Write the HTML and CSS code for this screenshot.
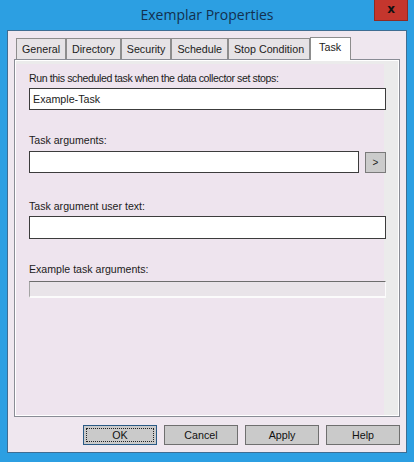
FILE: index.html
```html
<!DOCTYPE html>
<html>
<head>
<meta charset="utf-8">
<link rel="stylesheet" href="styles.css">
</head>
<body>
<div class="win">
  <div class="titlebar">
    <span class="title">Exemplar Properties</span>
    <div class="close">x</div>
  </div>
  <div class="client">
    <div class="tabs">
      <div class="tab">General</div>
      <div class="tab">Directory</div>
      <div class="tab">Security</div>
      <div class="tab">Schedule</div>
      <div class="tab">Stop Condition</div>
      <div class="tab active">Task</div>
    </div>
    <div class="panel">
      <div class="lbl l1">Run this scheduled task when the data collector set stops:</div>
      <div class="field f1">Example-Task</div>
      <div class="lbl l2">Task arguments:</div>
      <div class="row">
        <div class="field grow"></div>
        <div class="more">&gt;</div>
      </div>
      <div class="lbl l3">Task argument user text:</div>
      <div class="field f3"></div>
      <div class="lbl l4">Example task arguments:</div>
      <div class="disabled"></div>
    </div>
    <div class="buttons">
      <div class="btn default">OK</div>
      <div class="btn">Cancel</div>
      <div class="btn">Apply</div>
      <div class="btn">Help</div>
    </div>
  </div>
</div>
</body>
</html>
```
FILE: styles.css
```css
html, body {
  margin: 0;
  padding: 0;
}
body {
  width: 414px;
  height: 462px;
  overflow: hidden;
  font-family: "Liberation Sans", Arial, sans-serif;
  color: #1b1b1b;
}
.win {
  width: 414px;
  height: 462px;
  box-sizing: border-box;
  background: #2c9fe2;
  padding: 0 7px 9px;
  display: flex;
  flex-direction: column;
}
.titlebar {
  height: 30px;
  margin: 0 -7px;
  position: relative;
  display: flex;
  align-items: center;
  justify-content: center;
}
.title {
  font-family: "Open Sans", "Noto Sans", sans-serif;
  font-size: 14px;
  color: #13304e;
  margin-top: -1px;
}
.close {
  position: absolute;
  right: 6px;
  top: 0;
  width: 34px;
  height: 21px;
  box-sizing: border-box;
  background: #c4362d;
  border: 1px solid #8f2a23;
  border-top: none;
  display: flex;
  align-items: center;
  justify-content: center;
  font-family: "DejaVu Sans", sans-serif;
  font-weight: bold;
  font-size: 12px;
  color: #111;
  padding-bottom: 2px;
}
.client {
  flex: 1;
  background: #efe7ef;
  border: 1px solid #3e6d92;
  padding: 6px 6px 7px;
  display: flex;
  flex-direction: column;
}
.tabs {
  height: 22px;
  display: flex;
  align-items: flex-end;
  padding-left: 2px;
}
.tab {
  height: 21px;
  box-sizing: border-box;
  border: 1px solid #8d8d8d;
  border-bottom: none;
  background: #e6e3e6;
  padding: 0 5px;
  font-size: 10.7px;
  line-height: 20px;
  white-space: nowrap;
}
.tab.active {
  height: 23px;
  background: #fff;
  margin-bottom: -1px;
  position: relative;
  z-index: 1;
  padding: 0 9px 0 8px;
  line-height: 19px;
}
.panel {
  flex: 1;
  border: 1px solid #898c95;
  background: #eee4ee;
  box-shadow: inset 1px 1px 0 #fff, inset -1px -1px 0 #fff, inset -15px 0 0 #ebebeb, inset 0 4px 0 #ebebeb;
  padding: 12px 13px 0 14px;
  display: flex;
  flex-direction: column;
}
.lbl {
  font-size: 10.6px;
  line-height: 13px;
  white-space: nowrap;
}
.l1 {
  letter-spacing: -0.4px;
}
.field {
  box-sizing: border-box;
  height: 22px;
  background: #fff;
  border: 1px solid #3c3c3c;
  font-size: 10.7px;
  line-height: 20px;
  padding-left: 3px;
}
.f1 { margin-top: 3px; }
.l2 { margin-top: 24px; }
.row {
  margin-top: 4px;
  display: flex;
  align-items: flex-start;
}
.grow { flex: 1; }
.more {
  width: 21px;
  height: 21px;
  box-sizing: border-box;
  margin-top: 1px;
  margin-left: 6px;
  background: #cbcbcb;
  border: 1px solid #7a7a7a;
  font-size: 10px;
  display: flex;
  align-items: center;
  justify-content: center;
}
.l3 { margin-top: 27px; }
.f3 { margin-top: 3px; height: 23px; }
.l4 { margin-top: 24px; }
.disabled {
  margin-top: 5px;
  height: 17px;
  box-sizing: border-box;
  background: #e9e4e9;
  border-top: 1px solid #6d6d6d;
  border-left: 1px solid #a5a5a5;
  border-bottom: 2px solid #fbfbfb;
  border-right: 1px solid #fbfbfb;
}
.buttons {
  margin-top: 8px;
  height: 20px;
  display: flex;
  justify-content: flex-end;
  gap: 7px;
}
.btn {
  width: 74px;
  height: 20px;
  box-sizing: border-box;
  border: 1px solid #6f6f6f;
  background: #cacaca;
  font-size: 10.7px;
  display: flex;
  align-items: center;
  justify-content: center;
  color: #111;
}
.btn.default {
  position: relative;
  border-color: #2a5a85;
}
.btn.default::after {
  content: "";
  position: absolute;
  left: 2px;
  top: 2px;
  right: 2px;
  bottom: 2px;
  border: 1px dotted #222;
}
```
